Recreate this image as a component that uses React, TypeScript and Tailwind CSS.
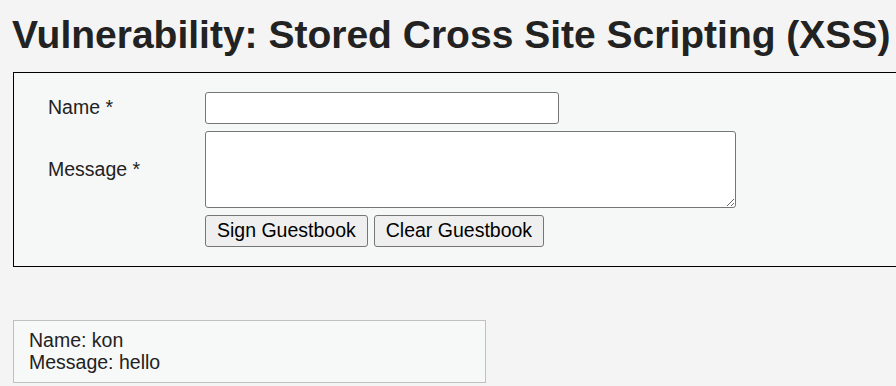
export default function App() {
  return (
    <div
      className="w-[896px] h-[386px] overflow-hidden bg-[#f4f4f4] text-[#222]"
      style={{ fontFamily: '"Liberation Sans", Arial, sans-serif' }}
    >
      <h1 className="mt-[12px] ml-[12px] text-[39px] leading-[45px] font-bold whitespace-nowrap text-[#222]">
        Vulnerability: Stored Cross Site Scripting (XSS)
      </h1>

      <form
        onSubmit={(e) => e.preventDefault()}
        className="mt-[15px] ml-[13px] w-[900px] border border-black bg-[#f6f7f7] pt-[19px] pb-[19px] pl-[34px] text-[19.5px]"
      >
        <div className="flex items-center">
          <label className="w-[157px]">Name *</label>
          <input
            type="text"
            className="w-[354px] h-[32px] bg-white border border-[#767676] rounded-[3px] px-1"
          />
        </div>
        <div className="flex items-center mt-[7px]">
          <label className="w-[157px]">Message *</label>
          <textarea className="w-[531px] h-[77px] bg-white border border-[#767676] rounded-[3px] px-1 block" />
        </div>
        <div className="flex gap-[6px] mt-[7px] ml-[157px]">
          <button
            type="button"
            className="h-[32px] px-[11px] bg-[#efefef] border border-[#767676] rounded-[3px] text-black leading-none"
          >
            Sign Guestbook
          </button>
          <button
            type="button"
            className="h-[32px] px-[11px] bg-[#efefef] border border-[#767676] rounded-[3px] text-black leading-none"
          >
            Clear Guestbook
          </button>
        </div>
      </form>

      <div className="mt-[53px] ml-[13px] w-[473px] border border-[#c0c0c0] bg-[#f7f8f8] pt-[8px] pb-[9px] pl-[15px] text-[19.5px] leading-[22px] text-[#222]">
        <div>Name: kon</div>
        <div>Message: hello</div>
      </div>
    </div>
  );
}
